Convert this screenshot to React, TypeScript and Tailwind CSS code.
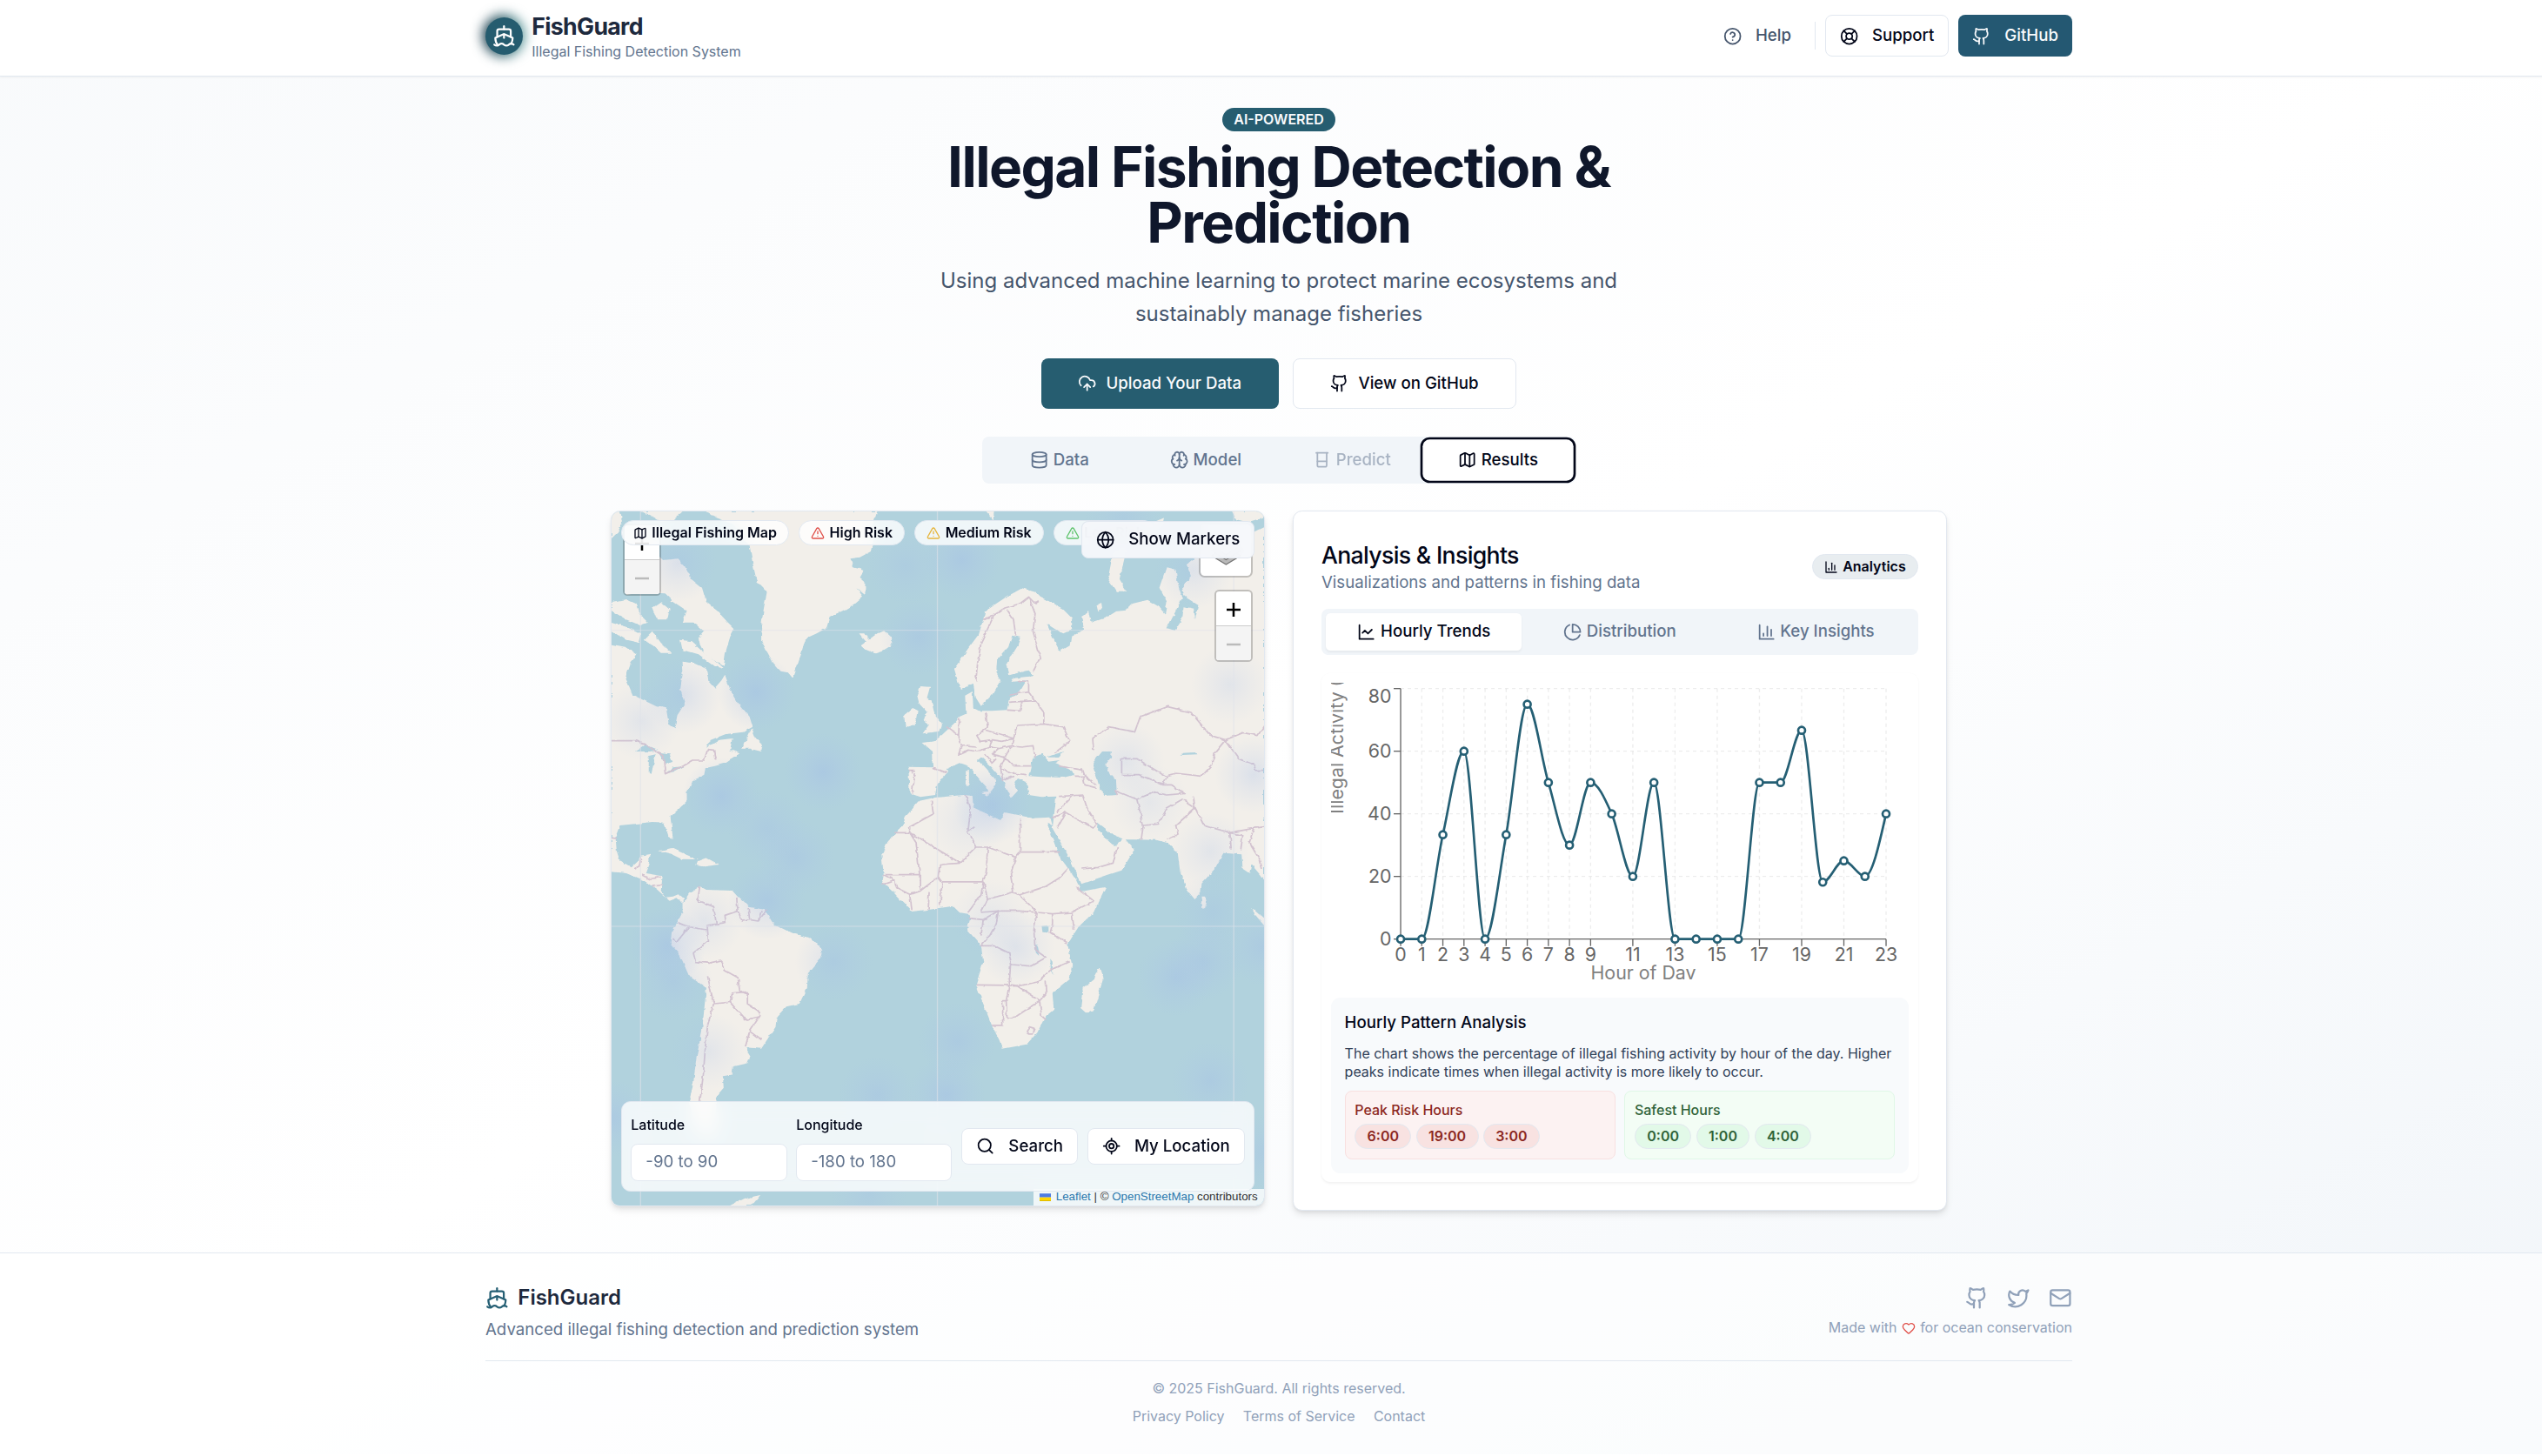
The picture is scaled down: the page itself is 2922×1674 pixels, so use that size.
import React from "react";
import {
  Beaker, Brain, CircleHelp, CloudUpload, Database, Github, Globe, Heart, LifeBuoy,
  LocateFixed, Mail, Map as MapIcon, Search, Ship, TriangleAlert, Twitter,
} from "lucide-react";

type IconProps = { className?: string };

function StrokeIcon({ className, children }: IconProps & { children: React.ReactNode }) {
  return (
    <svg viewBox="0 0 24 24" fill="none" stroke="currentColor" strokeWidth="2" strokeLinecap="round" strokeLinejoin="round" className={className}>
      {children}
    </svg>
  );
}

const LineChartIcon = ({ className }: IconProps) => (
  <StrokeIcon className={className}><path d="M3 3v18h18" /><path d="m19 9-5 5-4-4-3 3" /></StrokeIcon>
);
const BarChartIcon = ({ className }: IconProps) => (
  <StrokeIcon className={className}><path d="M3 3v18h18" /><path d="M18 17V9" /><path d="M13 17V5" /><path d="M8 17v-3" /></StrokeIcon>
);
const PieChartIcon = ({ className }: IconProps) => (
  <StrokeIcon className={className}><path d="M21.21 15.89A10 10 0 1 1 8 2.83" /><path d="M22 12A10 10 0 0 0 12 2v10z" /></StrokeIcon>
);

/* ---------- Header ---------- */

function Header() {
  return (
    <header className="h-[66px] border-b border-slate-200 bg-white shadow-xs">
      <div className="mx-auto flex h-[62px] w-[1368px] items-center justify-between">
        <div className="flex items-center gap-2">
          <div className="relative size-8">
            <div className="absolute -inset-0.5 rounded-full bg-gradient-to-r from-[#06283a] to-[#5fa3a3] blur-[5px]" />
            <div className="relative flex size-8 items-center justify-center rounded-full bg-[#255c6f] text-white">
              <Ship className="size-5" />
            </div>
          </div>
          <div>
            <div className="text-xl font-bold leading-7 tracking-tight text-slate-800">FishGuard</div>
            <div className="text-xs text-slate-500">Illegal Fishing Detection System</div>
          </div>
        </div>
        <nav className="flex items-center gap-2 text-sm font-medium">
          <a className="flex h-9 items-center gap-3 px-3 text-slate-600"><CircleHelp className="size-4" />Help</a>
          <div className="h-6 w-px bg-slate-200" />
          <a className="flex h-9 items-center gap-3 rounded-md border border-slate-200 bg-white px-3 text-slate-950"><LifeBuoy className="size-4" />Support</a>
          <a className="flex h-9 items-center gap-3 rounded-md bg-[#245872] px-3 text-slate-50"><Github className="size-4" />GitHub</a>
        </nav>
      </div>
    </header>
  );
}

/* ---------- Hero ---------- */

function Hero() {
  return (
    <section className="flex flex-col items-center text-center">
      <span className="rounded-full bg-[#265d70] px-2.5 py-0.5 text-xs font-semibold text-slate-50">AI-POWERED</span>
      <h1 className="mt-[7px] w-[768px] px-20 text-5xl leading-none font-bold tracking-tight text-slate-900">
        Illegal Fishing Detection &amp; Prediction
      </h1>
      <p className="mt-3 w-[620px] text-lg leading-[28.25px] text-slate-600">
        Using advanced machine learning to protect marine ecosystems and sustainably manage fisheries
      </p>
      <div className="mt-6 flex gap-3 text-sm font-medium">
        <a className="flex h-11 items-center gap-2 rounded-md bg-[#265d70] px-8 text-slate-50"><CloudUpload className="size-4" />Upload Your Data</a>
        <a className="flex h-11 items-center gap-2 rounded-md border border-slate-200 bg-white px-8 text-slate-950"><Github className="size-4" />View on GitHub</a>
      </div>
    </section>
  );
}

function MainTabs() {
  const tab = "flex h-8 items-center justify-center gap-1 rounded-sm";
  return (
    <div className="mx-auto mt-6 grid h-10 w-[512px] grid-cols-4 rounded-md bg-slate-100 p-1 text-sm font-medium text-slate-500">
      <div className={tab}><Database className="size-4" />Data</div>
      <div className={tab}><Brain className="size-4" />Model</div>
      <div className={tab + " opacity-50"}><Beaker className="size-4" />Predict</div>
      <div className={tab + " bg-white text-slate-950 ring-2 ring-slate-950 ring-offset-2 ring-offset-white"}><MapIcon className="size-4" />Results</div>
    </div>
  );
}

/* ---------- Map ---------- */

const LAND = [
  // Greenland
  "M244 57 262 75 285 88 305 100 320 130 345 175 352 235 362 300 385 335 378 390 372 450 372 500 385 540 400 580 415 605 432 610 445 632 455 590 465 545 475 495 500 478 522 460 530 420 560 400 585 378 607 350 592 322 612 345 612 300 600 285 610 260 585 250 578 220 600 215 625 195 632 150 628 110 640 57Z",
  // Baffin island
  "M60 180 110 175 145 225 180 220 195 245 210 290 235 320 245 370 270 400 295 440 310 462 300 490 290 540 285 590 262 570 240 545 225 500 240 470 215 440 190 440 200 400 170 370 150 340 100 335 60 345Z",
  "M26 370 60 360 82 375 90 410 110 440 92 450 60 430 26 400Z",
  "M120 390 140 370 160 395 155 430 130 430Z",
  "M185 500 210 505 232 535 255 560 285 600 262 590 225 550 190 535Z",
  "M100 500 120 470 140 510 165 545 140 545 122 520Z",
  "M26 57 45 57 52 90 40 130 26 150Z",
  "M95 57 190 57 170 85 140 92 125 78Z",
  "M26 440 60 455 95 480 90 510 60 500 26 470Z",
  // North and Central America
  "M26 515 60 525 85 550 70 580 58 630 75 690 130 730 152 735 158 790 172 805 178 760 195 720 185 670 190 620 188 575 215 580 245 600 250 640 265 665 280 640 288 620 300 670 320 720 345 765 352 800 330 818 290 825 255 845 245 872 275 845 305 840 300 880 322 892 290 925 265 935 243 942 240 965 215 985 200 1020 200 1055 180 1085 162 1110 165 1150 168 1188 156 1178 148 1130 120 1128 80 1135 45 1140 35 1180 38 1230 45 1260 72 1285 88 1262 92 1245 116 1238 112 1272 104 1305 144 1315 140 1365 152 1388 168 1385 180 1378 191 1392 190 1410 178 1390 160 1400 130 1360 100 1330 60 1305 26 1300Z",
  "M328 875 350 805 360 840 375 860 372 885 345 875Z",
  "M135 1228 165 1218 200 1242 225 1257 190 1256 165 1238Z",
  "M226 1262 245 1252 275 1275 240 1282 222 1278Z",
  // South America
  "M190 1410 205 1375 230 1350 245 1362 305 1365 320 1390 345 1422 380 1430 400 1480 440 1510 490 1530 513 1570 508 1600 480 1650 478 1700 460 1755 430 1765 408 1800 405 1835 385 1880 372 1910 335 1905 347 1935 340 1960 305 1972 303 2000 283 2005 285 2045 265 2080 270 2130 270 2180 250 2230 220 2180 205 2095 215 2030 222 1940 235 1850 245 1700 205 1660 185 1590 162 1545 165 1510 190 1440Z",
  "M300 2451 330 2428 370 2415 350 2451Z",
  // Iceland, Britain, Ireland
  "M598 478 612 478 620 500 640 478 655 468 672 490 672 520 650 540 635 547 615 535 604 520 615 508Z",
  "M740 660 762 662 755 700 768 715 775 760 790 790 785 815 745 823 760 792 745 775 757 752 737 720 732 690Z",
  "M722 735 735 745 730 790 705 802 702 760Z",
  "M890 57 910 57 908 88Z",
  // Europe and Asia
  "M885 430 890 400 915 375 940 350 975 322 1005 335 1015 350 1035 365 1070 395 1090 425 1090 465 1070 478 1050 462 1032 445 1045 490 1062 540 1085 520 1088 490 1118 465 1112 420 1130 403 1135 440 1165 425 1190 402 1215 398 1230 375 1265 362 1290 385 1305 410 1310 370 1292 320 1308 250 1330 258 1335 310 1345 355 1330 400 1310 460 1328 468 1345 430 1348 388 1372 395 1375 430 1382 380 1350 350 1345 320 1365 280 1355 240 1375 215 1440 180 1534 110 1534 1330 1525 1310 1505 1275 1500 1305 1485 1290 1482 1240 1440 1235 1420 1290 1390 1340 1388 1370 1372 1395 1358 1370 1340 1300 1334 1230 1310 1200 1285 1190 1210 1188 1185 1172 1150 1130 1148 1150 1168 1185 1188 1212 1210 1182 1234 1225 1205 1295 1150 1322 1112 1342 1100 1300 1078 1235 1045 1150 1054 1040 1020 1042 990 1035 985 990 968 978 955 990 965 1020 950 1045 938 1010 930 985 905 940 880 905 872 915 885 935 915 985 912 1005 898 1032 894 1010 870 970 850 935 830 925 800 945 802 958 778 1000 774 1035 740 1042 715 1030 712 938 770 940 768 885 745 855 772 850 788 830 822 782 830 765 845 755 843 692 860 678 862 735 875 745 905 745 940 742 945 700 965 690 985 640 950 645 955 632 1000 625 988 605 945 622 940 580 965 520 972 492 952 485 943 525 917 570 915 612 925 640 905 690 880 728 868 700 862 650 832 672 818 600 850 530 875 480Z",
  "M1250 140 1285 90 1305 78 1300 110 1215 160 1212 215 1200 290 1217 332 1192 332 1173 290 1185 200Z",
  "M1460 57 1534 57 1534 80 1500 95 1470 85Z",
  "M1147 380 1158 372 1160 390 1150 400Z",
  // Mediterranean islands, Sri Lanka, Sumatra
  "M845 950 852 948 852 1002 844 1005Z",
  "M880 1025 898 1022 895 1038Z",
  "M1388 1385 1398 1385 1403 1415 1392 1428Z",
  "M1506 1425 1534 1462 1534 1485 1512 1445Z",
  // Africa and Madagascar
  "M738 1055 770 1045 840 1035 860 1038 862 1078 900 1105 925 1122 935 1095 1000 1115 1040 1112 1045 1140 1032 1130 1060 1245 1082 1290 1100 1330 1112 1368 1168 1352 1140 1440 1105 1490 1080 1550 1090 1620 1085 1670 1045 1720 1048 1775 1028 1800 1010 1855 985 1895 930 1910 922 1880 905 1830 885 1755 868 1690 885 1610 880 1555 848 1500 855 1460 850 1445 830 1440 815 1418 760 1430 720 1437 680 1375 652 1335 655 1310 650 1240 665 1195 700 1140 705 1110Z",
  "M1155 1628 1163 1665 1140 1780 1125 1790 1110 1770 1115 1700 1140 1670Z",
];

const LAKES = [
  "M990 970 1000 905 1020 893 1035 920 1062 915 1050 925 1075 940 1096 965 1070 975 1020 973Z",
  "M1030 905 1050 895 1072 885 1060 905Z",
  "M1138 925 1160 885 1182 885 1180 905 1168 930 1178 965 1190 985 1192 1035 1165 1038 1152 1000Z",
  "M80 885 105 862 135 880 115 885Z",
  "M112 900 128 895 118 962 112 960Z",
  "M135 890 160 895 168 920 150 930Z",
  "M148 962 170 940 195 935 170 955Z",
  "M1340 900 1345 890 1375 888 1378 895 1345 897Z",
  "M1020 1487 1036 1485 1036 1510 1022 1508Z",
  "M1003 1545 1008 1550 1014 1590 1006 1578Z",
  "M1040 1600 1045 1610 1046 1655 1041 1640Z",
];

const BORDERS = [
  // The Americas
  "M26 848H80L105 862 145 900 150 962 195 932 215 915 240 915 248 878 262 880 265 910",
  "M26 1183 38 1185 M78 1290 90 1280 95 1245 M95 1310 115 1325 140 1318 M120 1350 145 1345",
  "M230 1350 225 1400 262 1420 268 1480 290 1475 288 1450 318 1435 315 1390 M318 1435 328 1470 345 1465 342 1425 M345 1465 365 1470 385 1430 M365 1470 372 1435 M268 1480 245 1485 248 1540 215 1580 220 1610 250 1615 280 1605 288 1640 318 1665 322 1710 340 1720 338 1715 305 1718 300 1750 262 1755 248 1660",
  "M180 1475 205 1490 175 1545 168 1530 M205 1490 245 1500 M340 1715 340 1755 365 1780 368 1800 335 1810 300 1750 M262 1755 248 1830 243 1900 238 2000 230 2095 M370 1795 345 1850 335 1905 M345 1850 372 1880",
  // Europe
  "M885 430 910 415 935 390 970 375 990 352 1005 375 1015 365 M910 415 880 510 872 580 868 640 M940 395 955 430 960 485 M990 352 1005 410 1000 470 1017 560 1000 610",
  "M965 640 990 645 990 680 945 690 M945 715 975 712 1005 710 990 680 M975 712 970 745 940 742 M1005 710 1025 750 1025 790 1070 800 1085 850 1050 890 M1025 790 965 795 955 840 M890 750 895 800 890 810 955 840 930 850 M890 810 870 830 878 850 905 845 930 850 M830 770 828 830 835 865 828 895 850 880 870 885 900 870 905 845 M800 800 828 830 M835 865 870 870 M900 870 920 875 950 865 955 840 M950 865 975 870 1000 865 1005 905 M950 865 935 905 955 935 995 935 M920 875 905 895 935 905 925 940 950 960 985 965 M925 940 930 985 955 970 M890 895 905 925 915 910 M768 940 800 958 M728 960 720 1030 M720 960 728 950 712 950",
  "M1060 935 1115 950 1120 970 1095 970 M1115 970 1120 1000 1145 1010 M1115 1035 1060 1040 M1120 970 1145 1000",
  // Central and southern Asia
  "M1140 880 1138 840 1175 800 1235 818 1248 765 1310 730 1365 750 1410 830 1445 845 1420 890 1415 930 1390 970 1330 960 1305 970 1240 910 1205 910 1205 965 M1195 1035 1190 1020 1240 1050 1280 1025 1310 1035 1350 1030 1320 1000 1300 1000 1310 970 M1205 965 1245 965 1300 1000 M1240 1050 1255 1140 1290 1135 1310 1080 1345 1050 1375 1080 1370 1040 M1255 1140 1250 1190 M1115 1035 1125 1080 1150 1140 M1310 1190 1335 1170 1330 1140 1375 1080 1395 1140 1455 1165 1510 1150 1534 1145",
  "M1445 845 1485 820 1520 830 1534 795 M1445 845 1475 910 1510 930 1515 950 1534 950 M1455 1165 1458 1220 M1455 1165 1485 1175 1480 1225 M1510 1150 1500 1200 1525 1260 1530 1290",
  "M1055 1095 1095 1035 M1045 1115 1075 1095 1140 1150 1145 1140 M1075 1095 1055 1150 M1112 1290 1150 1285 1185 1270 1195 1215",
  // Africa
  "M765 1055 770 1100 715 1145 715 1165 680 1165 M715 1165 832 1270 870 1215 850 1160 855 1090 845 1035 M850 1160 865 1145 M715 1165 730 1200 738 1310 655 1310 M832 1270 785 1275 M870 1215 895 1215 960 1250 970 1232 970 1115 M970 1232H1062 M895 1215 892 1300 885 1330",
  "M960 1250 948 1310 955 1370 968 1380 1030 1350 1062 1320 1080 1290 M885 1330 895 1395 880 1440 M790 1335 885 1335 880 1380 850 1440 M785 1275 780 1320 790 1340 785 1418 M780 1320 740 1365 740 1310 M760 1370 758 1430 M740 1365 715 1378 720 1430 M680 1330 685 1355 715 1378 M655 1310 680 1330 650 1345 M895 1395 955 1370 M880 1440 920 1435 968 1435 1010 1440 968 1380 M1010 1440 1045 1445 1090 1440 1140 1400 1098 1350 M1045 1445 1045 1480 1040 1510 1080 1545 M1090 1440 1095 1500",
  "M850 1460 885 1465 880 1520 M885 1465 920 1435 915 1480 900 1520 880 1555 910 1555 945 1580 950 1620 995 1625 1030 1595 1005 1570 1002 1500 1010 1440 M868 1690 945 1692 948 1620 M945 1692 965 1695 1010 1680 1040 1640 1085 1610 M945 1692 938 1745 930 1745 930 1830 905 1830 M938 1745 940 1805 960 1800 1015 1745 965 1695 M1015 1745 1030 1720 1028 1675 M1015 1745 1020 1800 1028 1810 M985 1850 992 1835 1003 1840 998 1860 988 1860Z",
];

const HEAT: [number, number, number][] = [
  [835, 225, 1], [705, 245, 0.6], [1210, 80, 0.6], [360, 680, 1], [735, 490, 0.8], [515, 955, 1], [280, 1040, 1],
  [385, 1150, 0.7], [450, 1250, 0.8], [905, 1070, 1], [190, 690, 0.7], [95, 780, 0.5], [1455, 655, 0.5], [1510, 965, 0.7],
  [1215, 920, 0.5], [1270, 1060, 0.4], [850, 1130, 0.4], [1410, 1230, 0.5], [385, 1400, 0.9], [155, 1555, 1], [170, 1680, 0.7],
  [540, 1610, 0.7], [240, 1470, 0.5], [960, 1560, 0.6], [900, 1460, 0.4], [1330, 1665, 0.9], [1395, 1610, 0.8],
  [1415, 1440, 0.6], [1530, 1560, 0.8], [825, 1885, 0.8], [250, 1920, 0.5], [640, 2070, 0.8], [800, 2070, 1],
  [1410, 2020, 0.8], [26, 2150, 0.9], [620, 2410, 0.6], [180, 235, 0.7], [1534, 2270, 0.7], [1370, 260, 0.6],
];

function WorldMap() {
  return (
    <svg className="absolute inset-0 size-full" viewBox="26 57 1508 2394" preserveAspectRatio="none">
      <defs>
        <radialGradient id="heat">
          <stop offset="0" stopColor="#a3bde8" stopOpacity="0.42" />
          <stop offset="0.45" stopColor="#a8c0ea" stopOpacity="0.22" />
          <stop offset="1" stopColor="#a9c4ea" stopOpacity="0" />
        </radialGradient>
        <filter id="coast" x="0" y="0" width="100%" height="100%">
          <feTurbulence type="fractalNoise" baseFrequency="0.05" numOctaves="3" seed="4" result="noise" />
          <feDisplacementMap in="SourceGraphic" in2="noise" scale="9" xChannelSelector="R" yChannelSelector="G" />
        </filter>
      </defs>
      <rect x="26" y="57" width="1508" height="2394" fill="#b1d2dd" />
      <g filter="url(#coast)">
        <rect x="0" y="20" width="1580" height="2470" fill="#b1d2dd" />
        {LAND.map((d) => <path key={d} d={d} fill="#f2efea" />)}
        {LAKES.map((d) => <path key={d} d={d} fill="#b1d2dd" />)}
        {BORDERS.map((d) => (
          <path key={d} d={d} fill="none" stroke="#d3c3d0" strokeWidth="1.3" vectorEffect="non-scaling-stroke" strokeLinejoin="round" />
        ))}
      </g>
      {HEAT.map(([x, y, o]) => <ellipse key={x + "-" + y} cx={x} cy={y} rx="90" ry="134" fill="url(#heat)" opacity={o} />)}
      {[93, 779, 1464].map((x) => <path key={x} d={`M${x} 57V2451`} stroke="#dfe3ea" strokeOpacity="0.6" vectorEffect="non-scaling-stroke" />)}
      {[467, 1488].map((y) => <path key={y} d={`M26 ${y}H1534`} stroke="#dfe3ea" strokeOpacity="0.45" vectorEffect="non-scaling-stroke" />)}
    </svg>
  );
}

function ZoomControl() {
  return (
    <div className="w-[33px] rounded-[4px] border-2 border-[#00000033] bg-white bg-clip-padding text-black">
      <div className="flex h-[30px] items-center justify-center border-b border-[#ccc] pt-0.5">
        <svg viewBox="0 0 12 12" className="size-3" stroke="currentColor" strokeWidth="1.9"><path d="M0 6h12M6 0v12" /></svg>
      </div>
      <div className="flex h-[29px] items-center justify-center rounded-b-[2px] bg-[#f4f4f4] pt-0.5 text-[#bbb]">
        <svg viewBox="0 0 12 12" className="size-3" stroke="currentColor" strokeWidth="1.9"><path d="M0 6h12" /></svg>
      </div>
    </div>
  );
}

const mapBadge = "flex items-center rounded-full border border-slate-200 bg-white/80 px-2.5 py-0.5 text-xs font-semibold whitespace-nowrap text-slate-950 backdrop-blur-sm";

function MapCard() {
  return (
    <div className="relative h-[600px] overflow-hidden rounded-lg border border-slate-200 bg-white shadow-md">
      <WorldMap />
      <div className="absolute top-[11px] left-2.5"><ZoomControl /></div>
      <div className="absolute top-2.5 right-2.5 flex flex-col items-end gap-[11px]">
        <div className="flex h-[47px] w-[46px] items-center justify-center rounded-[5px] border-2 border-[#00000033] bg-white bg-clip-padding">
          <svg viewBox="0 0 26 26" className="size-[26px]">
            <path d="M13 10 25.5 18 13 25.5 0.5 18Z" fill="#b9b9b9" stroke="#747474" strokeWidth="0.9" />
            <path d="M13 5 25.5 13.5 13 21.5 0.5 13.5Z" fill="#b9b9b9" stroke="#747474" strokeWidth="0.9" />
            <path d="M13 1 25.5 9 13 17 0.5 9Z" fill="#fff" stroke="#747474" strokeWidth="0.9" />
          </svg>
        </div>
        <ZoomControl />
      </div>
      <div className="absolute right-0 bottom-0 flex h-3.5 items-center bg-white/80 px-[5.5px] font-['Liberation_Sans',Arial,sans-serif] text-[10px] whitespace-pre text-[#333]">
        <svg viewBox="0 0 12 8" className="mr-1 h-[7px] w-[10px]"><path fill="#4C7BE1" d="M0 0h12v4H0z" /><path fill="#FFD500" d="M0 4h12v3H0z" /><path fill="#E0BC00" d="M0 7h12v1H0z" /></svg>
        <span className="text-[#2b78ad]">Leaflet</span> | © <span className="text-[#2b78ad]">OpenStreetMap</span> contributors
      </div>
      <div className="absolute top-2 left-2 flex gap-2">
        <div className={mapBadge}><MapIcon className="mr-1 size-3" />Illegal Fishing Map</div>
        <div className={mapBadge}><TriangleAlert className="mr-1 size-3 text-[#e0504a]" />High Risk</div>
        <div className={mapBadge}><TriangleAlert className="mr-1 size-3 text-[#e6b53c]" />Medium Risk</div>
        <div className={mapBadge}><TriangleAlert className="mr-1 size-3 text-[#5fc36c]" />Low Risk</div>
      </div>
      <div className="absolute top-[8.5px] right-2 flex h-8 items-center gap-3 rounded-md border border-slate-200 bg-[#f5f8fb]/95 px-3 text-sm font-medium text-slate-950 backdrop-blur-sm">
        <Globe className="size-4" />Show Markers
      </div>
      <div className="absolute right-2 bottom-3 left-2 flex items-center gap-2 rounded-lg border border-slate-200 bg-white/80 p-2 text-slate-950 backdrop-blur-sm">
        {[["Latitude", "-90 to 90"], ["Longitude", "-180 to 180"]].map(([label, hint]) => (
          <div key={label} className="flex-1">
            <div className="h-6 text-xs leading-6 font-medium">{label}</div>
            <div className="mt-1 flex h-8 items-center rounded-md border border-slate-200 bg-white px-3 text-sm text-slate-500">{hint}</div>
          </div>
        ))}
        <div className="flex h-8 items-center gap-3 rounded-md border border-slate-200 bg-white px-3 text-sm font-medium"><Search className="size-4" />Search</div>
        <div className="flex h-8 items-center gap-3 rounded-md border border-slate-200 bg-white px-3 text-sm font-medium"><LocateFixed className="size-4" />My Location</div>
      </div>
    </div>
  );
}

/* ---------- Chart ---------- */

const HOURS = [0, 0, 33.33, 60, 0, 33.33, 75, 50, 30, 50, 40, 20, 50, 0, 0, 0, 0, 50, 50, 66.67, 18.18, 25, 20, 40];
const TICKS = [0, 1, 2, 3, 4, 5, 6, 7, 8, 9, 11, 13, 15, 17, 19, 21, 23];
const px = (hour: number) => 60 + (hour * 418.5) / 23;
const py = (value: number) => 221 - value * 2.7;

// Monotone cubic interpolation through equally spaced points.
function monotonePath(values: number[]) {
  const xs = values.map((_, i) => px(i));
  const ys = values.map(py);
  const n = values.length;
  const slopes = xs.slice(1).map((x, i) => (ys[i + 1] - ys[i]) / (x - xs[i]));
  const t = new Array<number>(n).fill(0);
  for (let i = 1; i < n - 1; i++) {
    const a = slopes[i - 1];
    const b = slopes[i];
    t[i] = (Math.sign(a) + Math.sign(b)) * Math.min(Math.abs(a), Math.abs(b), 0.5 * Math.abs((a + b) / 2)) || 0;
  }
  t[0] = (3 * slopes[0] - t[1]) / 2;
  t[n - 1] = (3 * slopes[n - 2] - t[n - 2]) / 2;
  let d = `M${xs[0]},${ys[0]}`;
  for (let i = 0; i < n - 1; i++) {
    const h = (xs[i + 1] - xs[i]) / 3;
    d += `C${xs[i] + h},${ys[i] + h * t[i]},${xs[i + 1] - h},${ys[i + 1] - h * t[i + 1]},${xs[i + 1]},${ys[i + 1]}`;
  }
  return d;
}

function HourlyChart() {
  return (
    <svg className="block h-64 w-full overflow-hidden text-[16px]" viewBox="0 0 498.5 256">
      <g stroke="#ccc" strokeOpacity="0.35" strokeDasharray="3 3">
        {[80, 60, 40, 20].map((v) => <path key={v} d={`M60 ${py(v)}H478.5`} />)}
        {TICKS.slice(1).map((h) => <path key={h} d={`M${px(h)} 5V221`} />)}
      </g>
      <g stroke="#666">
        <path d="M60 5V221H478.5" fill="none" />
        {[0, 20, 40, 60, 80].map((v) => <path key={v} d={`M54 ${py(v)}h6`} />)}
        {TICKS.map((h) => <path key={h} d={`M${px(h)} 221v6`} />)}
      </g>
      <g fill="#666" textAnchor="end">
        {[0, 20, 40, 60].map((v) => <text key={v} x="52" y={py(v) + 5.7}>{v}</text>)}
        <text x="52" y="17.6">80</text>
      </g>
      <g fill="#666" textAnchor="middle">
        {TICKS.map((h) => <text key={h} x={px(h)} y="240">{h}</text>)}
      </g>
      <text x="269.25" y="256" fill="#808080" textAnchor="middle">Hour of Day</text>
      <text transform="translate(10.7 113) rotate(-90)" fill="#808080">Illegal Activity (%)</text>
      <path d={monotonePath(HOURS)} fill="none" stroke="#255f74" strokeWidth="2" />
      {HOURS.map((v, i) => <circle key={i} cx={px(i)} cy={py(v)} r="3" fill="#fff" stroke="#255f74" strokeWidth="2" />)}
    </svg>
  );
}

function AnalysisCard() {
  const tab = "flex h-8 items-center justify-center gap-1 rounded-sm";
  const pill = "rounded-full border border-slate-200 px-2.5 py-0.5 text-xs font-semibold";
  return (
    <div className="rounded-lg border border-slate-200 bg-white p-6 text-slate-950 shadow-md">
      <div className="flex items-center justify-between">
        <div>
          <div className="text-xl leading-7 font-medium tracking-tight">Analysis &amp; Insights</div>
          <div className="text-sm text-slate-500">Visualizations and patterns in fishing data</div>
        </div>
        <div className="flex items-center rounded-full border border-slate-200 bg-[#e8edf0] px-2.5 py-0.5 text-xs font-semibold">
          <BarChartIcon className="mr-1 size-3" />Analytics
        </div>
      </div>
      <div className="mt-3 grid h-10 grid-cols-3 rounded-md bg-slate-100 p-1 text-sm font-medium text-slate-500">
        <div className={tab + " bg-white text-slate-950 shadow-xs"}><LineChartIcon className="size-4" />Hourly Trends</div>
        <div className={tab}><PieChartIcon className="size-4" />Distribution</div>
        <div className={tab}><BarChartIcon className="size-4" />Key Insights</div>
      </div>
      <div className="mt-4 rounded-lg bg-white p-2 shadow-xs">
        <HourlyChart />
        <div className="mt-4 rounded-lg bg-[#f8fafc] p-3">
          <div className="text-sm font-medium">Hourly Pattern Analysis</div>
          <p className="mt-2 text-xs text-slate-700">
            The chart shows the percentage of illegal fishing activity by hour of the day. Higher peaks indicate times when illegal activity is more likely to occur.
          </p>
          <div className="mt-2 grid grid-cols-2 gap-2">
            <div className="rounded-md border border-[#f8e0e0] bg-[#fcf2f2] p-2 text-[#8c2822]">
              <div className="text-xs font-medium">Peak Risk Hours</div>
              <div className="mt-1 flex gap-1">
                {["6:00", "19:00", "3:00"].map((h) => <span key={h} className={pill + " bg-[#f8e2e1]"}>{h}</span>)}
              </div>
            </div>
            <div className="rounded-md border border-[#e0f8e7] bg-[#f3fdf5] p-2 text-[#306339]">
              <div className="text-xs font-medium">Safest Hours</div>
              <div className="mt-1 flex gap-1">
                {["0:00", "1:00", "4:00"].map((h) => <span key={h} className={pill + " bg-[#e2f9e8]"}>{h}</span>)}
              </div>
            </div>
          </div>
        </div>
      </div>
    </div>
  );
}

/* ---------- Footer ---------- */

function Footer() {
  return (
    <footer className="mt-9 border-t border-slate-200 bg-white/60 py-6">
      <div className="mx-auto w-[1368px]">
        <div className="flex items-center justify-between pb-4">
          <div>
            <div className="flex items-center gap-2 text-lg leading-7 font-semibold text-slate-800"><Ship className="size-5 text-[#255f74]" />FishGuard</div>
            <div className="mt-1 text-sm text-slate-500">Advanced illegal fishing detection and prediction system</div>
          </div>
          <div className="flex flex-col items-end gap-2 text-slate-400">
            <div className="flex gap-4"><Github className="size-5" /><Twitter className="size-5" /><Mail className="size-5" /></div>
            <div className="flex items-center gap-1 text-xs">Made with <Heart className="size-3 text-[#e0504a]" /> for ocean conservation</div>
          </div>
        </div>
        <div className="border-t border-slate-200 pt-4 text-center text-xs text-slate-400">
          <div>© 2025 FishGuard. All rights reserved.</div>
          <div className="mt-2 flex justify-center gap-4"><span>Privacy Policy</span><span>Terms of Service</span><span>Contact</span></div>
        </div>
      </div>
    </footer>
  );
}

export default function App() {
  return (
    <div className="h-[1674px] w-[2922px] overflow-hidden bg-white">
      <div className="w-[2205px] bg-gradient-to-br from-slate-50 via-white to-slate-100 font-['Inter',sans-serif] [zoom:1.33333]">
        <Header />
        <main className="mx-auto w-[1152px] pt-[27.25px]">
          <Hero />
          <MainTabs />
          <div className="mt-[23.25px] grid grid-cols-2 items-start gap-6">
            <MapCard />
            <AnalysisCard />
          </div>
        </main>
        <Footer />
      </div>
    </div>
  );
}
